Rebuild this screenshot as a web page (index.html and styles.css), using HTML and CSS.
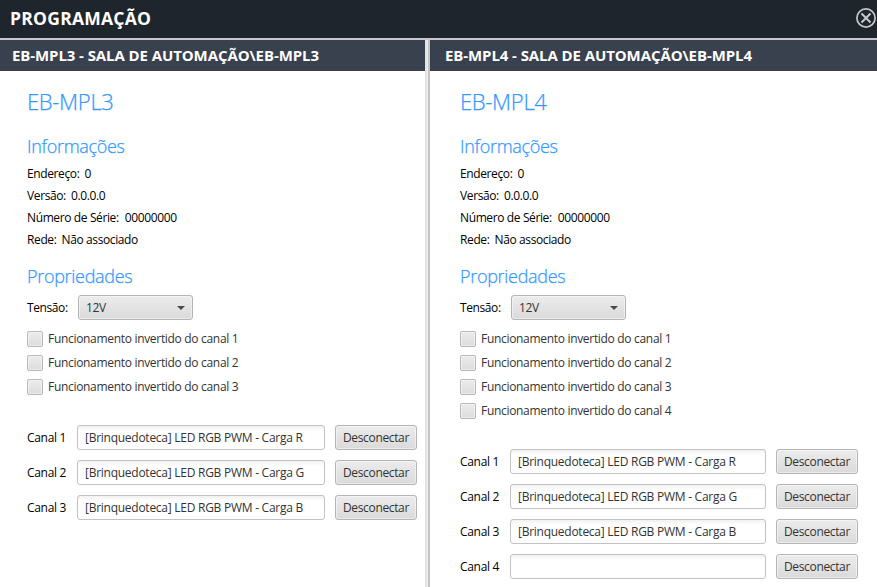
FILE: index.html
```html
<!DOCTYPE html>
<html lang="pt-BR">
<head>
<meta charset="utf-8">
<title>Programação</title>
<link rel="stylesheet" href="styles.css">
</head>
<body>
<header class="topbar">
  <h1>PROGRAMAÇÃO</h1>
  <svg class="close" width="22" height="22" viewBox="0 0 22 22" fill="none" stroke="#c6c9cb"><circle cx="11" cy="11" r="9.1" stroke-width="1.7"/><path d="M6.5 6.5l9 9M15.500 6.500l-9 9" stroke-width="2"/></svg>
</header>
<main class="split">
  <section class="panel">
    <h2 class="bar">EB-MPL3 - SALA DE AUTOMAÇÃO\EB-MPL3</h2>
    <div class="body">
      <h3 class="name">EB-MPL3</h3>
      <h4 class="section">Informações</h4>
      <dl class="info">
        <div><dt>Endereço:</dt><dd>0</dd></div>
        <div><dt>Versão:</dt><dd>0.0.0.0</dd></div>
        <div><dt>Número de Série:</dt><dd class="serial">00000000</dd></div>
        <div><dt>Rede:</dt><dd>Não associado</dd></div>
      </dl>
      <h4 class="section props">Propriedades</h4>
      <div class="voltage"><span>Tensão:</span><div class="combo"><span>12V</span><i class="arrow"></i></div></div>
      <div class="checks">
        <label><i class="box"></i><span>Funcionamento invertido do canal 1</span></label>
        <label><i class="box"></i><span>Funcionamento invertido do canal 2</span></label>
        <label><i class="box"></i><span>Funcionamento invertido do canal 3</span></label>
      </div>
      <div class="channels">
        <div class="row"><span>Canal 1</span><div class="field">[Brinquedoteca] LED RGB PWM - Carga R</div><button>Desconectar</button></div>
        <div class="row"><span>Canal 2</span><div class="field">[Brinquedoteca] LED RGB PWM - Carga G</div><button>Desconectar</button></div>
        <div class="row"><span>Canal 3</span><div class="field">[Brinquedoteca] LED RGB PWM - Carga B</div><button>Desconectar</button></div>
      </div>
    </div>
  </section>
  <div class="divider"></div>
  <section class="panel wide">
    <h2 class="bar">EB-MPL4 - SALA DE AUTOMAÇÃO\EB-MPL4</h2>
    <div class="body">
      <h3 class="name">EB-MPL4</h3>
      <h4 class="section">Informações</h4>
      <dl class="info">
        <div><dt>Endereço:</dt><dd>0</dd></div>
        <div><dt>Versão:</dt><dd>0.0.0.0</dd></div>
        <div><dt>Número de Série:</dt><dd class="serial">00000000</dd></div>
        <div><dt>Rede:</dt><dd>Não associado</dd></div>
      </dl>
      <h4 class="section props">Propriedades</h4>
      <div class="voltage"><span>Tensão:</span><div class="combo"><span>12V</span><i class="arrow"></i></div></div>
      <div class="checks">
        <label><i class="box"></i><span>Funcionamento invertido do canal 1</span></label>
        <label><i class="box"></i><span>Funcionamento invertido do canal 2</span></label>
        <label><i class="box"></i><span>Funcionamento invertido do canal 3</span></label>
        <label><i class="box"></i><span>Funcionamento invertido do canal 4</span></label>
      </div>
      <div class="channels">
        <div class="row"><span>Canal 1</span><div class="field">[Brinquedoteca] LED RGB PWM - Carga R</div><button>Desconectar</button></div>
        <div class="row"><span>Canal 2</span><div class="field">[Brinquedoteca] LED RGB PWM - Carga G</div><button>Desconectar</button></div>
        <div class="row"><span>Canal 3</span><div class="field">[Brinquedoteca] LED RGB PWM - Carga B</div><button>Desconectar</button></div>
        <div class="row"><span>Canal 4</span><div class="field"></div><button>Desconectar</button></div>
      </div>
    </div>
  </section>
</main>
</body>
</html>
```
FILE: styles.css
```css
* { box-sizing: border-box; margin: 0; }
body {
  height: 587px;
  overflow: hidden;
  display: flex;
  flex-direction: column;
  background: #fff;
  color: #000;
  font: 12px/22px "Open Sans", "Noto Sans", sans-serif;
  letter-spacing: -0.31px;
  white-space: nowrap;
}
.topbar {
  height: 40px;
  flex: none;
  display: flex;
  align-items: center;
  justify-content: space-between;
  padding: 0 1px 3px 10px;
  background: #1f252c;
  border-bottom: 2px solid #c8c8c8;
}
.topbar h1 { font-size: 17.5px; font-weight: 700; line-height: 24px; letter-spacing: 0.25px; color: #fff; }
.close { flex: none; margin-right: -1px; }
.split { flex: 1; display: flex; min-height: 0; }
.panel { width: 425px; flex: none; }
.panel.wide { width: 447px; }
.divider {
  width: 5px;
  flex: none;
  background: linear-gradient(90deg, #dedede 0, #efefef 3px, #c4c4c4 3px);
}
.bar {
  height: 31px;
  padding-left: 12px;
  background: #39404e;
  color: #fff;
  font-size: 15px;
  font-weight: 700;
  line-height: 31px;
  letter-spacing: -0.09px;
}
.wide .bar { padding-left: 15px; }
.body { padding: 16px 0 0 27px; }
.wide .body { padding-left: 30px; }
.name { color: #3399ff; font-size: 22px; font-weight: 300; line-height: 28px; letter-spacing: -0.3px; -webkit-text-stroke: 0.25px #3399ff; }
.section { margin-top: 18px; color: #3399ff; font-size: 18px; font-weight: 300; line-height: 26px; letter-spacing: -0.3px; -webkit-text-stroke: 0.25px #3399ff; }
.section.props { margin-top: 12px; }
.info { margin-top: 4px; }
.info div { display: flex; gap: 5px; letter-spacing: -0.38px; }
.info .serial { margin-left: 1px; letter-spacing: -0.36px; }
.voltage { display: flex; align-items: center; margin-top: 6px; height: 25px; }
.voltage > span { width: 51px; letter-spacing: -0.4px; }
.combo, button {
  height: 25px;
  border: 1px solid #b5b5b5;
  border-radius: 3px;
  background: linear-gradient(#ececec, #dadada);
  box-shadow: inset 0 0 0 1px rgba(255, 255, 255, 0.45);
  color: #333;
}
.combo { width: 115px; display: flex; align-items: center; justify-content: space-between; padding: 0 7px; }
.arrow { border: solid transparent; border-width: 4px 4px 0; border-top-color: #4a4a4a; }
.checks { margin-top: 7px; color: #333; }
.checks label { height: 24px; display: flex; align-items: center; gap: 5px; }
.box {
  width: 16px;
  height: 16px;
  border: 1px solid #b9b9b9;
  border-radius: 2px;
  background: linear-gradient(#ececec, #dcdcdc);
  box-shadow: inset 0 0 0 1px rgba(255, 255, 255, 0.45);
}
.channels { margin-top: 26px; display: flex; flex-direction: column; gap: 10px; }
.row { display: flex; align-items: center; height: 25px; }
.row > span { width: 50px; }
.field {
  width: 248px;
  height: 25px;
  padding: 0 7px;
  border: 1px solid #c2c2c2;
  border-radius: 3px;
  background: linear-gradient(#f1f1f1, #fff 5px);
  color: #333;
  line-height: 23px;
  letter-spacing: -0.26px;
}
.wide .field { width: 256px; }
button { width: 82px; margin-left: 10px; padding: 0; font: inherit; letter-spacing: -0.35px; }
```
